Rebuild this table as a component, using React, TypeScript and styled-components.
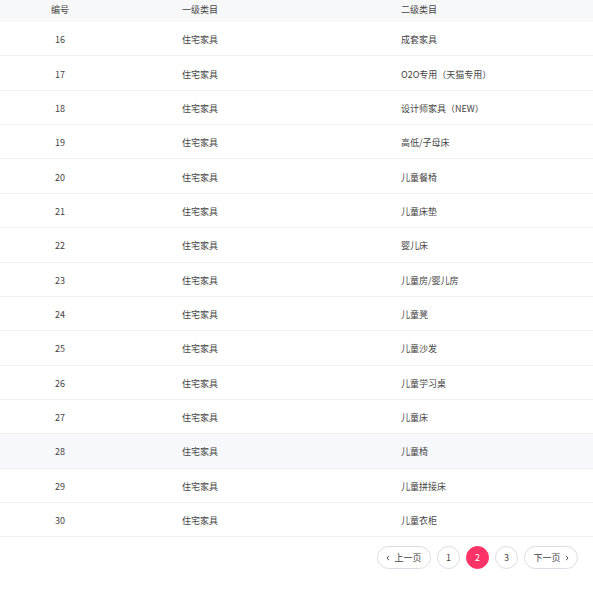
import React from "react";
import styled, { createGlobalStyle } from "styled-components";

const Global = createGlobalStyle`
  html, body { margin: 0; padding: 0; background: #fff; }
  body { font-family: "Noto Sans CJK SC", "Noto Sans", sans-serif; color: #444; }
`;

const Table = styled.div`
  width: 593px;
  display: flex;
  flex-direction: column;
`;

const Row = styled.div<{ $head?: boolean; $hl?: boolean }>`
  display: grid;
  grid-template-columns: 120px 160px 1fr;
  align-items: center;
  box-sizing: border-box;
  height: ${(p) => (p.$head ? "22px" : "34.36px")};
  background: ${(p) => (p.$head ? "#f7f8fa" : p.$hl ? "#f7f8fc" : "#fff")};
  border-bottom: ${(p) => (p.$head ? "none" : "1px solid #f0f0f3")};
  font-size: 9px;
  color: #444;
  padding: ${(p) => (p.$head ? "0 0 3px" : "2px 0 0")};
`;

const Cell = styled.div<{ $left?: boolean }>`
  text-align: ${(p) => (p.$left ? "left" : "center")};
  padding-left: ${(p) => (p.$left ? "121px" : "0")};
  white-space: nowrap;
`;

const Pager = styled.div`
  display: flex;
  justify-content: flex-end;
  gap: 6px;
  padding: 9px 15px 0 0;
`;

const PageBtn = styled.button<{ $active?: boolean; $wide?: boolean }>`
  box-sizing: border-box;
  height: 23px;
  width: ${(p) => (p.$wide ? "54px" : "23px")};
  border-radius: 12px;
  border: 1px solid ${(p) => (p.$active ? "#ff3366" : "#dcdde2")};
  background: ${(p) => (p.$active ? "#ff3366" : "#fff")};
  color: ${(p) => (p.$active ? "#fff" : "#444")};
  font-family: "Noto Sans CJK SC", "Noto Sans", sans-serif;
  font-size: 9px;
  padding: 0;
  display: flex;
  align-items: center;
  justify-content: center;
  gap: 4px;
`;

const Chev = ({ dir }: { dir: "l" | "r" }) => (
  <svg width="4" height="6" viewBox="0 0 4 6">
    <path
      d={dir === "l" ? "M3 0.8 L1 3 L3 5.2" : "M1 0.8 L3 3 L1 5.2"}
      fill="none"
      stroke="#555"
      strokeWidth="1"
    />
  </svg>
);

const subs = [
  "成套家具",
  "O2O专用（天猫专用）",
  "设计师家具（NEW）",
  "高低/子母床",
  "儿童餐椅",
  "儿童床垫",
  "婴儿床",
  "儿童房/婴儿房",
  "儿童凳",
  "儿童沙发",
  "儿童学习桌",
  "儿童床",
  "儿童椅",
  "儿童拼接床",
  "儿童衣柜",
];

export default function App() {
  return (
    <>
      <Global />
      <Table>
        <Row $head>
          <Cell>编号</Cell>
          <Cell>一级类目</Cell>
          <Cell $left>二级类目</Cell>
        </Row>
        {subs.map((s, i) => (
          <Row key={i} $hl={i + 16 === 28}>
            <Cell>{i + 16}</Cell>
            <Cell>住宅家具</Cell>
            <Cell $left>{s}</Cell>
          </Row>
        ))}
      </Table>
      <Pager>
        <PageBtn $wide>
          <Chev dir="l" />
          上一页
        </PageBtn>
        <PageBtn>1</PageBtn>
        <PageBtn $active>2</PageBtn>
        <PageBtn>3</PageBtn>
        <PageBtn $wide>
          下一页
          <Chev dir="r" />
        </PageBtn>
      </Pager>
    </>
  );
}
